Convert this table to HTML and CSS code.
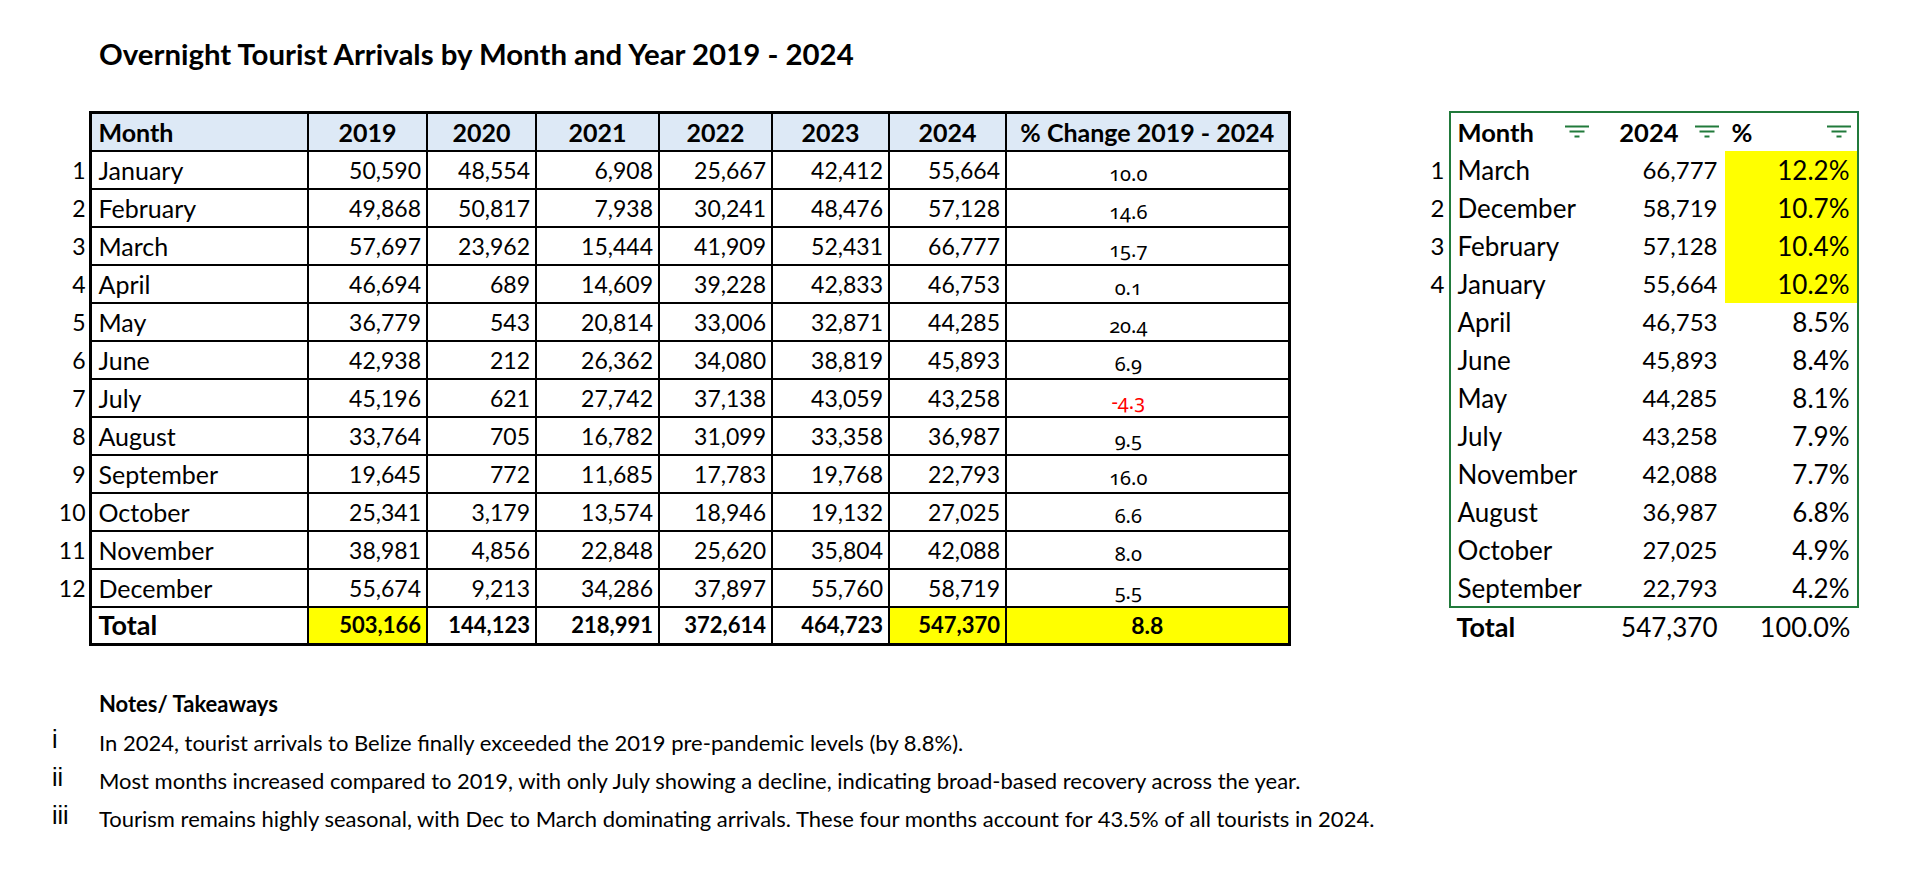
FILE: index.html
```html
<!DOCTYPE html>
<html lang="en">
<head>
<meta charset="utf-8">
<title>Overnight Tourist Arrivals</title>
<link rel="stylesheet" href="styles.css">
</head>
<body>
<div class="page">
  <h1 class="title">Overnight Tourist Arrivals by Month and Year 2019 - 2024</h1>
  <div class="tables">
    <table class="data">
      <colgroup>
        <col class="c-rn"><col class="c-month"><col class="c-2019"><col class="c-2020"><col class="c-2021"><col class="c-2022"><col class="c-2023"><col class="c-2024"><col class="c-pct">
      </colgroup>
      <tr class="head">
        <td class="rn"></td><th class="first">Month</th><th>2019</th><th>2020</th><th>2021</th><th>2022</th><th>2023</th><th>2024</th><th class="last">% Change 2019 - 2024</th>
      </tr>
      <tr><td class="rn">1</td><td class="first">January</td><td class="num">50,590</td><td class="num">48,554</td><td class="num">6,908</td><td class="num">25,667</td><td class="num">42,412</td><td class="num">55,664</td><td class="last chg">10.0</td></tr>
      <tr><td class="rn">2</td><td class="first">February</td><td class="num">49,868</td><td class="num">50,817</td><td class="num">7,938</td><td class="num">30,241</td><td class="num">48,476</td><td class="num">57,128</td><td class="last chg">14.6</td></tr>
      <tr><td class="rn">3</td><td class="first">March</td><td class="num">57,697</td><td class="num">23,962</td><td class="num">15,444</td><td class="num">41,909</td><td class="num">52,431</td><td class="num">66,777</td><td class="last chg">15.7</td></tr>
      <tr><td class="rn">4</td><td class="first">April</td><td class="num">46,694</td><td class="num">689</td><td class="num">14,609</td><td class="num">39,228</td><td class="num">42,833</td><td class="num">46,753</td><td class="last chg">0.1</td></tr>
      <tr><td class="rn">5</td><td class="first">May</td><td class="num">36,779</td><td class="num">543</td><td class="num">20,814</td><td class="num">33,006</td><td class="num">32,871</td><td class="num">44,285</td><td class="last chg">20.4</td></tr>
      <tr><td class="rn">6</td><td class="first">June</td><td class="num">42,938</td><td class="num">212</td><td class="num">26,362</td><td class="num">34,080</td><td class="num">38,819</td><td class="num">45,893</td><td class="last chg">6.9</td></tr>
      <tr><td class="rn">7</td><td class="first">July</td><td class="num">45,196</td><td class="num">621</td><td class="num">27,742</td><td class="num">37,138</td><td class="num">43,059</td><td class="num">43,258</td><td class="last chg neg">-4.3</td></tr>
      <tr><td class="rn">8</td><td class="first">August</td><td class="num">33,764</td><td class="num">705</td><td class="num">16,782</td><td class="num">31,099</td><td class="num">33,358</td><td class="num">36,987</td><td class="last chg">9.5</td></tr>
      <tr><td class="rn">9</td><td class="first">September</td><td class="num">19,645</td><td class="num">772</td><td class="num">11,685</td><td class="num">17,783</td><td class="num">19,768</td><td class="num">22,793</td><td class="last chg">16.0</td></tr>
      <tr><td class="rn">10</td><td class="first">October</td><td class="num">25,341</td><td class="num">3,179</td><td class="num">13,574</td><td class="num">18,946</td><td class="num">19,132</td><td class="num">27,025</td><td class="last chg">6.6</td></tr>
      <tr><td class="rn">11</td><td class="first">November</td><td class="num">38,981</td><td class="num">4,856</td><td class="num">22,848</td><td class="num">25,620</td><td class="num">35,804</td><td class="num">42,088</td><td class="last chg">8.0</td></tr>
      <tr><td class="rn">12</td><td class="first">December</td><td class="num">55,674</td><td class="num">9,213</td><td class="num">34,286</td><td class="num">37,897</td><td class="num">55,760</td><td class="num">58,719</td><td class="last chg">5.5</td></tr>
      <tr class="total"><td class="rn"></td><td class="first">Total</td><td class="num hl">503,166</td><td class="num">144,123</td><td class="num">218,991</td><td class="num">372,614</td><td class="num">464,723</td><td class="num hl">547,370</td><td class="last hl center">8.8</td></tr>
    </table>

    <table class="rank">
      <colgroup>
        <col class="r-rn"><col class="r-month"><col class="r-val"><col class="r-pct">
      </colgroup>
      <tr class="rhead">
        <td class="rn"></td>
        <th class="rfirst"><div class="hd"><span>Month</span><svg class="flt" viewBox="0 0 24 13" width="24" height="13"><path d="M0 1.5H24M4.5 6.5H19.5M9.5 11.5H14.5"/></svg></div></th>
        <th><div class="hd hd-right"><span>2024</span><svg class="flt" viewBox="0 0 24 13" width="24" height="13"><path d="M0 1.5H24M4.5 6.5H19.5M9.5 11.5H14.5"/></svg></div></th>
        <th class="rlast"><div class="hd"><span>%</span><svg class="flt" viewBox="0 0 24 13" width="24" height="13"><path d="M0 1.5H24M4.5 6.5H19.5M9.5 11.5H14.5"/></svg></div></th>
      </tr>
      <tr><td class="rn">1</td><td class="rfirst">March</td><td class="num">66,777</td><td class="pct rlast hl">12.2%</td></tr>
      <tr><td class="rn">2</td><td class="rfirst">December</td><td class="num">58,719</td><td class="pct rlast hl">10.7%</td></tr>
      <tr><td class="rn">3</td><td class="rfirst">February</td><td class="num">57,128</td><td class="pct rlast hl">10.4%</td></tr>
      <tr><td class="rn">4</td><td class="rfirst">January</td><td class="num">55,664</td><td class="pct rlast hl">10.2%</td></tr>
      <tr><td class="rn"></td><td class="rfirst">April</td><td class="num">46,753</td><td class="pct rlast">8.5%</td></tr>
      <tr><td class="rn"></td><td class="rfirst">June</td><td class="num">45,893</td><td class="pct rlast">8.4%</td></tr>
      <tr><td class="rn"></td><td class="rfirst">May</td><td class="num">44,285</td><td class="pct rlast">8.1%</td></tr>
      <tr><td class="rn"></td><td class="rfirst">July</td><td class="num">43,258</td><td class="pct rlast">7.9%</td></tr>
      <tr><td class="rn"></td><td class="rfirst">November</td><td class="num">42,088</td><td class="pct rlast">7.7%</td></tr>
      <tr><td class="rn"></td><td class="rfirst">August</td><td class="num">36,987</td><td class="pct rlast">6.8%</td></tr>
      <tr><td class="rn"></td><td class="rfirst">October</td><td class="num">27,025</td><td class="pct rlast">4.9%</td></tr>
      <tr class="rend"><td class="rn"></td><td class="rfirst">September</td><td class="num">22,793</td><td class="pct rlast">4.2%</td></tr>
      <tr class="rtotal"><td class="rn"></td><td class="bold">Total</td><td class="num tnum">547,370</td><td class="pct">100.0%</td></tr>
    </table>
  </div>

  <div class="notes">
    <div class="notes-head">Notes/ Takeaways</div>
    <div class="note"><span class="roman">i</span><span class="ntext">In 2024, tourist arrivals to Belize finally exceeded the 2019 pre-pandemic levels (by 8.8%).</span></div>
    <div class="note"><span class="roman">ii</span><span class="ntext">Most months increased compared to 2019, with only July showing a decline, indicating broad-based recovery across the year.</span></div>
    <div class="note"><span class="roman">iii</span><span class="ntext">Tourism remains highly seasonal, with Dec to March dominating arrivals. These four months account for 43.5% of all tourists in 2024.</span></div>
  </div>
</div>
</body>
</html>
```

FILE: styles.css
```css
html, body {
  margin: 0;
  padding: 0;
  background: #ffffff;
}

body {
  font-family: Lato, "Liberation Sans", sans-serif;
  color: #000000;
}

.page {
  padding-top: 36px;
}

.title {
  margin: 0 0 0 99px;
  font-size: 29.4px;
  font-weight: 700;
  line-height: 36px;
}

.tables {
  display: flex;
  align-items: flex-start;
  margin-top: 39px;
  padding-left: 48px;
  gap: 119px;
}

/* ---------- main table ---------- */
.data {
  border-collapse: collapse;
  table-layout: fixed;
  font-size: 25px;
}

.c-rn { width: 42px; }
.c-month { width: 218px; }
.c-2019 { width: 119px; }
.c-2020 { width: 109px; }
.c-2021 { width: 123px; }
.c-2022 { width: 113px; }
.c-2023 { width: 117px; }
.c-2024 { width: 117px; }
.c-pct { width: 283px; }

.data tr {
  height: 38px;
}

.data th,
.data td {
  border: 2px solid #000;
  padding: 0 5px;
  white-space: nowrap;
  line-height: 26px;
}

.data th {
  background: #dde9f6;
  font-weight: 700;
  font-size: 25px;
  text-align: center;
  border-top-width: 3px;
}

.data .first {
  border-left-width: 3px;
  text-align: left;
  padding-left: 7px;
}

.data .last {
  border-right-width: 3px;
}

.data .rn {
  border: none;
  background: transparent;
  text-align: right;
  padding: 0 3px 0 0;
  font-size: 23px;
}

.num {
  text-align: right;
  font-size: 23px;
}

.chg {
  text-align: center;
  font-family: "Noto Sans", Lato, sans-serif;
  font-variant-numeric: oldstyle-nums;
  font-size: 20px;
  padding: 8px 38px 0 0 !important;
  vertical-align: middle;
}

.neg {
  color: #ff0000;
}

.center {
  text-align: center;
}

.data .total td {
  font-weight: 700;
  border-bottom-width: 3px;
}

.data .total td.first {
  font-size: 27px;
}

.data .total td.num {
  font-size: 22px;
}

.data .total td.center {
  font-size: 23px;
}

.data .total td.rn {
  border: none;
}

.hl {
  background: #ffff00;
}

/* ---------- ranking table ---------- */
.rank {
  border-collapse: collapse;
  table-layout: fixed;
  font-size: 26px;
}

.r-rn { width: 40px; }
.r-month { width: 145px; }
.r-val { width: 130px; }
.r-pct { width: 133px; }

.rank tr {
  height: 38px;
}

.rank th,
.rank td {
  padding: 0 7px;
  white-space: nowrap;
  line-height: 26px;
  border: none;
}

.rank .rn {
  text-align: right;
  padding: 0 4px 0 0;
  font-size: 24px;
}

.rank .rhead th {
  border-top: 2px solid #217a3b;
  font-weight: 700;
  font-size: 25.5px;
  text-align: left;
  padding-right: 6px;
}

.rank .rhead {
  height: 39px;
}

.rank .rfirst {
  border-left: 2px solid #217a3b;
}

.rank .rlast {
  border-right: 2px solid #217a3b;
}

.rank .rend td {
  border-bottom: 2px solid #217a3b;
}

.rank .rend td.rn {
  border-bottom: none;
}

.rank .num {
  font-size: 24px;
}

.rank .pct {
  text-align: right;
  font-size: 26px;
}

.rank .tnum {
  font-size: 26px;
}

.rank .bold {
  font-weight: 700;
  font-size: 27px;
}

.rank .rtotal .pct {
  font-size: 27px;
}

.hd {
  display: flex;
  align-items: center;
  justify-content: space-between;
}

.hd-right {
  justify-content: flex-end;
  gap: 16px;
}

.flt {
  flex: none;
  stroke: #217a3b;
  stroke-width: 2;
  fill: none;
  margin-top: -2px;
}

/* ---------- notes ---------- */
.notes {
  margin-top: 39px;
  padding-left: 52px;
}

.notes-head {
  padding-left: 47px;
  font-size: 22px;
  font-weight: 700;
  line-height: 38px;
}

.note {
  display: flex;
  align-items: center;
  height: 38px;
}

.roman {
  width: 47px;
  flex: none;
  font-family: "Liberation Sans", Arial, sans-serif;
  font-size: 25px;
  margin-top: -6px;
}

.ntext {
  font-size: 22px;
}
```
